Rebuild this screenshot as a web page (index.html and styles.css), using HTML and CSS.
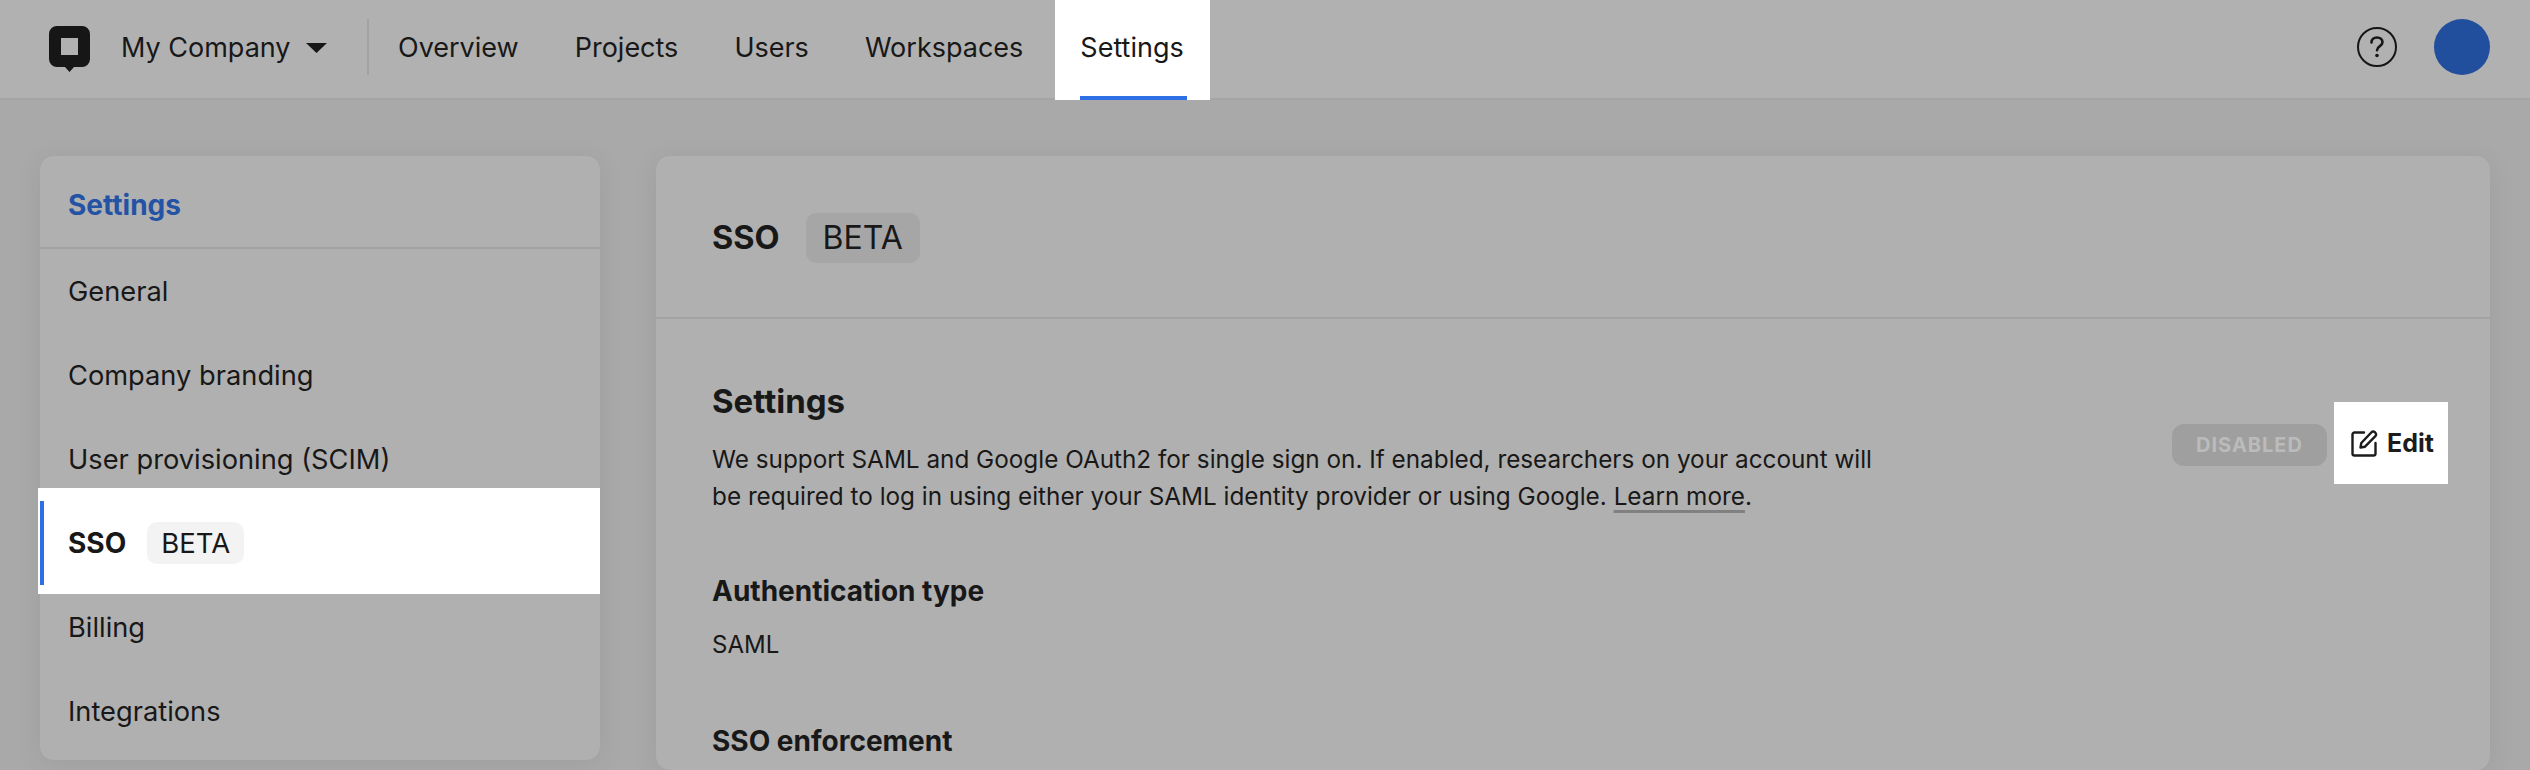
FILE: index.html
```html
<!DOCTYPE html>
<html lang="en">
<head>
<meta charset="utf-8">
<title>SSO settings</title>
<link rel="stylesheet" href="styles.css">
</head>
<body>
<header class="topbar">
  <div class="brand">
    <svg class="logo" width="41" height="46" viewBox="0 0 41 46" aria-hidden="true">
      <path fill="#161616" fill-rule="evenodd" d="M8 0h25a8 8 0 0 1 8 8v25a8 8 0 0 1-8 8h-8l-4.500 5-4.500-5H8a8 8 0 0 1-8-8V8a8 8 0 0 1 8-8zM12 12v17h17V12z"/>
    </svg>
    <span class="brand-name">My Company</span>
    <svg class="caret" width="21" height="10" viewBox="0 0 21 10" aria-hidden="true"><path fill="#161616" d="M0 0h21L10.500 10z"/></svg>
  </div>
  <nav class="tabs">
    <a class="tab">Overview</a>
    <a class="tab">Projects</a>
    <a class="tab">Users</a>
    <a class="tab">Workspaces</a>
    <a class="tab tab-active">Settings</a>
  </nav>
  <div class="topbar-right">
    <svg class="help" width="40" height="40" viewBox="0 0 40 40" aria-hidden="true">
      <circle cx="20" cy="20" r="19" fill="none" stroke="#161616" stroke-width="2"/>
      <path fill="none" stroke="#161616" stroke-width="2.600" stroke-linecap="round" d="M14.500 15.500c0-3.200 2.400-5 5.500-5s5.500 1.900 5.500 4.800c0 4-5.500 3.700-5.500 8"/>
      <circle cx="20" cy="28.500" r="1.800" fill="#161616"/>
    </svg>
    <div class="avatar"></div>
  </div>
</header>

<div class="layout">
  <aside class="card sidebar">
    <h2 class="side-title">Settings</h2>
    <ul class="side-list">
      <li class="side-item">General</li>
      <li class="side-item">Company branding</li>
      <li class="side-item">User provisioning (SCIM)</li>
      <li class="side-item side-active"><strong class="side-strong">SSO</strong><span class="chip chip-light">BETA</span></li>
      <li class="side-item">Billing</li>
      <li class="side-item">Integrations</li>
    </ul>
  </aside>

  <main class="card content">
    <div class="content-head">
      <h1 class="page-title">SSO</h1>
      <span class="chip chip-dim">BETA</span>
    </div>
    <section class="section">
      <div class="section-top">
        <div class="section-intro">
          <h2 class="section-title">Settings</h2>
          <p class="section-text">We support SAML and Google OAuth2 for single sign on. If enabled, researchers on your account will be required to log in using either your SAML identity provider or using Google. <a class="link">Learn more</a>.</p>
        </div>
        <div class="section-actions">
          <span class="status">DISABLED</span>
          <button class="edit">
            <svg width="27" height="27" viewBox="0 0 27 27" aria-hidden="true">
              <path fill="none" stroke="#1c1c1c" stroke-width="2.400" stroke-linecap="round" stroke-linejoin="round" d="M13 2.500H3.500a2 2 0 0 0-2 2v19a2 2 0 0 0 2 2h19a2 2 0 0 0 2-2V13"/>
              <path fill="none" stroke="#1c1c1c" stroke-width="2.400" stroke-linejoin="round" d="M9.500 17.500l.8-4.500L20.500 2.200a2.300 2.300 0 0 1 3.300 0l.6.6a2.300 2.300 0 0 1 0 3.300L14 16.700z"/>
            </svg>
            <span>Edit</span>
          </button>
        </div>
      </div>
      <h3 class="field-title">Authentication type</h3>
      <p class="field-value">SAML</p>
      <h3 class="field-title field-next">SSO enforcement</h3>
    </section>
  </main>
</div>
</body>
</html>
```
FILE: styles.css
```css
* { box-sizing: border-box; }
html, body { margin: 0; height: 770px; overflow: hidden; }
body {
  background: #a9a9a9;
  color: #181818;
  font-family: Inter, "Liberation Sans", sans-serif;
  font-size: 27px;
}
h1, h2, h3, p, ul { margin: 0; padding: 0; }
ul { list-style: none; }

/* top bar */
.topbar {
  height: 100px;
  background: #b1b1b1;
  border-bottom: 2px solid #a5a5a5;
  display: flex;
  padding-left: 49px;
  padding-right: 40px;
}
.brand {
  display: flex;
  align-items: center;
  height: 98px;
  width: 320px;
  position: relative;
}
.brand::after {
  content: "";
  position: absolute;
  right: 0;
  top: 19px;
  width: 2px;
  height: 56px;
  background: #a3a3a3;
}
.logo { flex: none; align-self: flex-start; margin-top: 26px; }
.brand-name { margin-left: 31px; margin-top: -4px; }
.caret { margin-left: 15px; margin-top: -3px; }
.tabs { display: flex; gap: 6px; margin-left: 4px; }
.tab {
  height: 100px;
  padding: 0 25px 6px;
  display: flex;
  align-items: center;
  position: relative;
}
.tab-active { background: #fff; padding: 0 26px 6px 25px; margin-left: 1px; }
.tab-active::after {
  content: "";
  position: absolute;
  left: 25px;
  right: 23px;
  bottom: 0;
  height: 4px;
  background: #2f6fe6;
}
.topbar-right {
  margin-left: auto;
  display: flex;
  align-items: center;
  gap: 37px;
  height: 94px;
}
.avatar { width: 56px; height: 56px; border-radius: 50%; background: #224e9e; }

/* layout */
.layout {
  display: grid;
  grid-template-columns: 560px 1fr;
  gap: 56px;
  padding: 56px 40px 0;
  align-items: start;
}
.card {
  background: #b0b0b0;
  border-radius: 14px;
  box-shadow: 0 4px 28px rgba(0, 0, 0, .07);
}

/* sidebar */
.sidebar { height: 604px; }
.side-title {
  height: 93px;
  padding: 29px 28px 0;
  border-bottom: 2px solid #a3a3a3;
  color: #2453a5;
  font-size: 28px;
  font-weight: 700;
  line-height: 40px;
}
.side-item {
  height: 84px;
  display: flex;
  align-items: center;
  padding-left: 28px;
  position: relative;
  font-size: 27.250px;
}
.side-active { z-index: 0; }
.side-active::before {
  content: "";
  position: absolute;
  z-index: -1;
  left: -2px;
  right: 0;
  top: -13px;
  bottom: -9px;
  background: #fff;
}
.side-active::after {
  content: "";
  position: absolute;
  left: 0;
  top: 0;
  bottom: 0;
  width: 4px;
  background: #2f6fe6;
}
.side-strong { font-weight: 700; font-size: 28px; }
.chip {
  display: inline-flex;
  align-items: center;
  border-radius: 10px;
}
.chip-light {
  background: #f3f3f3;
  height: 42px;
  padding: 0 14px;
  margin-left: 21px;
  font-size: 27.500px;
}
.chip-dim {
  background: #a6a6a6;
  height: 50px;
  padding: 0 17px;
  margin-left: 26px;
  font-size: 32px;
}

/* content */
.content { height: 614px; overflow: hidden; }
.content-head {
  height: 163px;
  padding: 2px 56px 0;
  display: flex;
  align-items: center;
  border-bottom: 2px solid #a3a3a3;
}
.page-title { font-size: 32.500px; font-weight: 700; line-height: 40px; }
.section { padding: 62px 56px 0; }
.section-top { display: flex; justify-content: space-between; align-items: flex-start; }
.section-intro { width: 1170px; }
.section-title { font-size: 33px; font-weight: 700; line-height: 40px; }
.section-text { font-size: 24.300px; line-height: 37px; margin-top: 20px; }
.link {
  text-decoration: underline 3px #808080;
  text-underline-offset: 5px;
  text-decoration-skip-ink: none;
}
.section-actions {
  display: flex;
  align-items: center;
  gap: 7px;
  margin-top: 21px;
  margin-right: -14px;
}
.status {
  width: 155px;
  height: 42px;
  margin-top: 4px;
  border-radius: 12px;
  background: #9f9f9f;
  color: #bbb;
  display: flex;
  align-items: center;
  justify-content: center;
  font-size: 20px;
  font-weight: 700;
  letter-spacing: 1px;
}
.edit {
  width: 114px;
  height: 82px;
  border: 0;
  background: #fff;
  color: #1c1c1c;
  font: 700 25px Inter, "Liberation Sans", sans-serif;
  display: flex;
  align-items: center;
  gap: 9px;
  padding: 0 0 0 17px;
}
.field-title { font-size: 28px; font-weight: 700; line-height: 40px; }
.section-top + .field-title { margin-top: 56px; }
.field-value { font-size: 24px; line-height: 36px; margin-top: 16px; }
.field-next { margin-top: 58px; }
```
